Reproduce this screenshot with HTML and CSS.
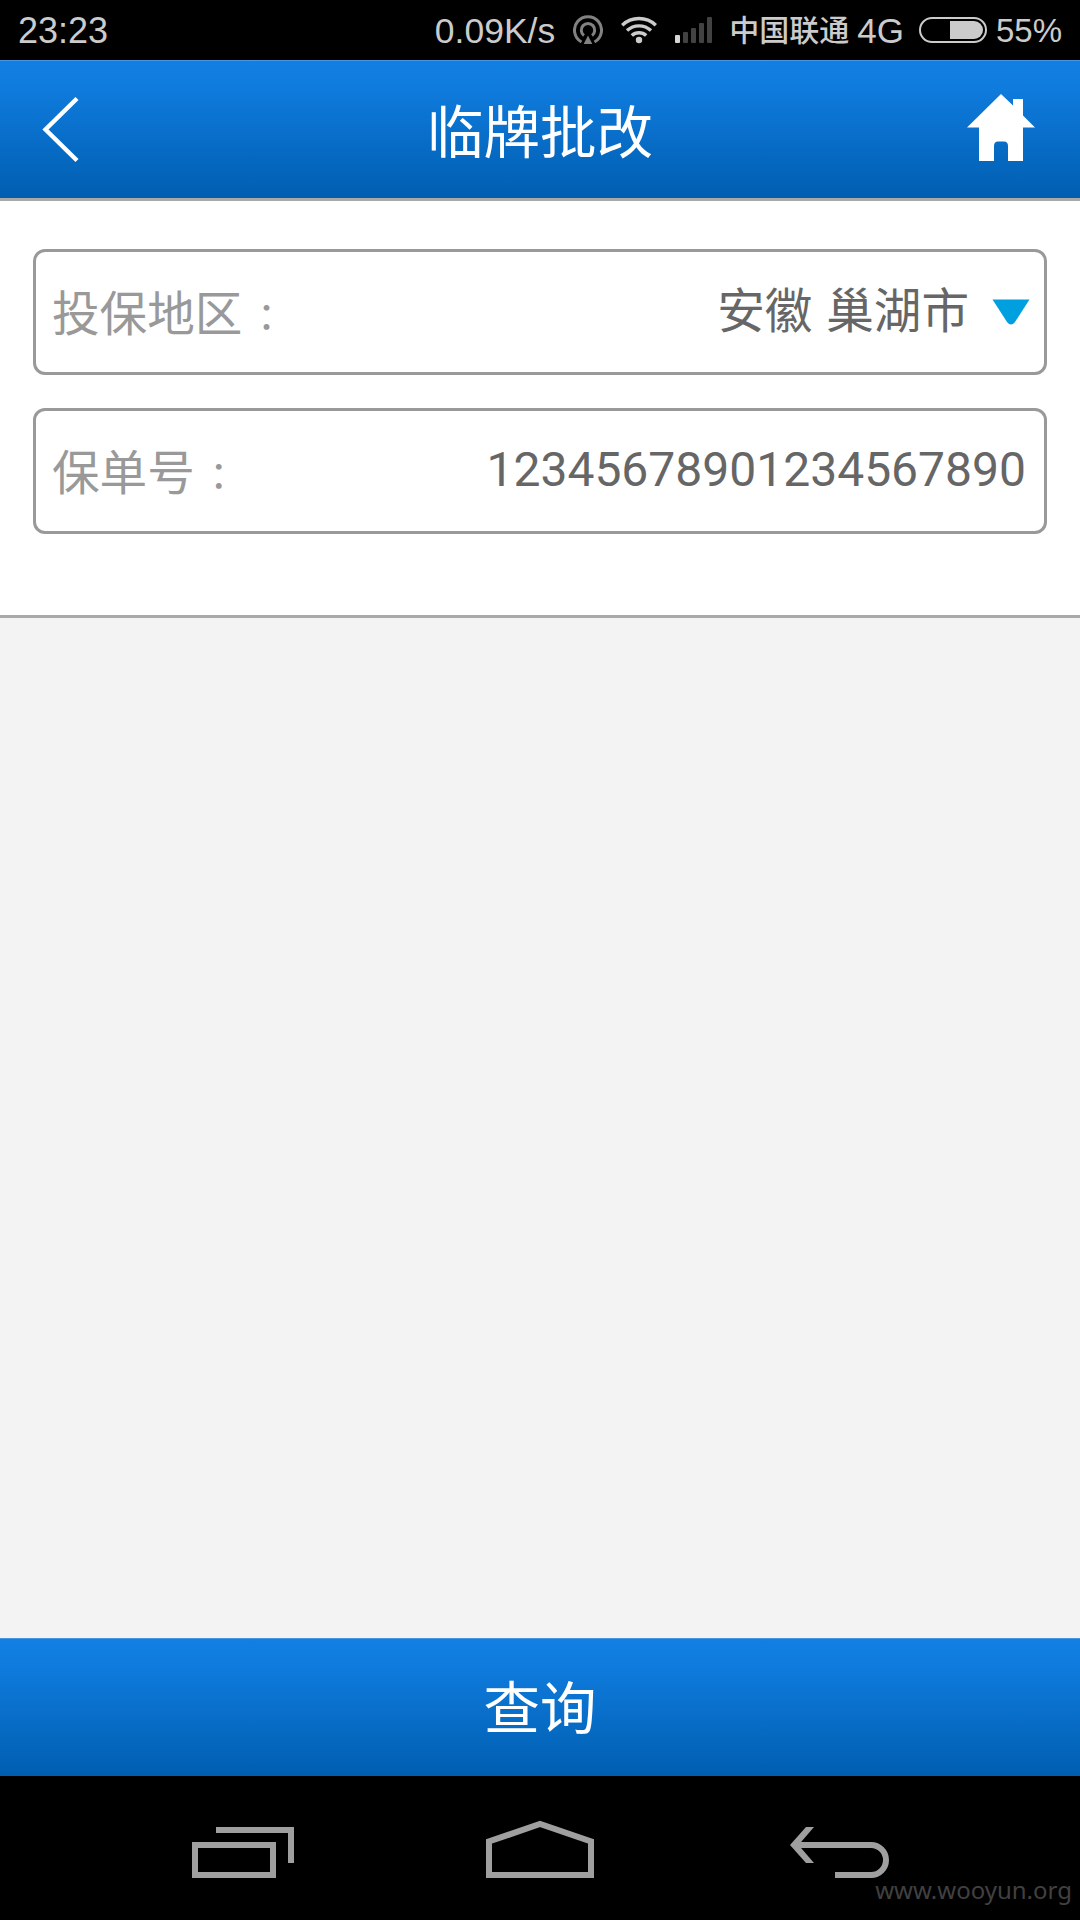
FILE: index.html
```html
<!DOCTYPE html>
<html lang="zh-CN">
  <head>
    <meta charset="UTF-8" />
    <meta name="viewport" content="width=device-width, initial-scale=1.0" />
    <title>临牌批改</title>
    <link rel="stylesheet" href="styles.css">
  </head>
  <body>
    <div class="status-bar">
      <span class="time">23:23</span>
      <span class="speed">0.09K/s</span>
      <svg class="hotspot" width="30" height="30" viewBox="0 0 30 30" fill="none" stroke="#828282" stroke-width="3">
        <path d="M8.5 27A13.5 13.5 0 1 1 21.5 27" />
        <path d="M11 20.5A6.7 6.7 0 1 1 19 20.5" />
        <path d="M15 20.5L19.3 29H10.7Z" fill="#828282" stroke="none" />
      </svg>
      <svg class="wifi" width="36" height="28" viewBox="0 0 36 28" fill="none" stroke="#cbcbcb" stroke-width="3.4">
        <path d="M1.2 9.2A24.5 24.5 0 0 1 34.8 9.2" />
        <path d="M6 14.6A17.5 17.5 0 0 1 30 14.6" />
        <path d="M10.8 19.6A10.5 10.5 0 0 1 25.2 19.6" />
        <circle cx="18" cy="24" r="3.2" fill="#cbcbcb" stroke="none" />
      </svg>
      <svg class="signal" width="37" height="26" viewBox="0 0 37 26" fill="#424242">
        <rect x="0" y="18" width="5" height="8" rx="1" fill="#d6d6d6" />
        <rect x="8" y="15" width="5" height="11" rx="1" />
        <rect x="16" y="11" width="5" height="15" rx="1" />
        <rect x="24" y="6" width="5" height="20" rx="1" />
        <rect x="32" y="0" width="5" height="26" rx="1" />
      </svg>
      <span class="carrier">中国联通</span>
      <span class="network">4G</span>
      <svg class="battery" width="68" height="26" viewBox="0 0 68 26">
        <rect x="1" y="1" width="66" height="24" rx="12" fill="none" stroke="#cbcbcb" stroke-width="2" />
        <path d="M31 4H55A9 9 0 0 1 55 22H31Z" fill="#cbcbcb" />
      </svg>
      <span class="percent">55%</span>
    </div>

    <header class="header">
      <svg class="back" width="40" height="70" viewBox="0 0 40 70" fill="none" stroke="#fff" stroke-width="4.4">
        <path d="M37 4.5L5.5 35.5L37 66.5" />
      </svg>
      <h1 class="title">临牌批改</h1>
      <svg class="home" width="68" height="68" viewBox="0 0 68 68" fill="#fff">
        <path d="M34 0L46 11.5V5H56V21.5L68 33.5H56V67H41V52Q41 47.5 37 47.5H31Q27 47.5 27 52V67H12V33.5H0Z" />
      </svg>
    </header>

    <div class="form">
      <div class="field">
        <span class="label">投保地区<span class="colon" lang="zh-TW">：</span></span>
        <span class="value city">安徽 巢湖市</span>
        <svg class="arrow" width="38" height="27" viewBox="0 0 38 27" fill="#009fe0">
          <path d="M0.5 0.5H37.5L23 23Q19 28 15 23Z" />
        </svg>
      </div>
      <div class="field">
        <span class="label">保单号<span class="colon" lang="zh-TW">：</span></span>
        <span class="value number">12345678901234567890</span>
      </div>
    </div>

    <main class="content"></main>

    <button class="query-btn">查询</button>

    <nav class="nav-bar">
      <svg width="102" height="51" viewBox="0 0 102 51" fill="none" stroke="#9f9f9f" stroke-width="6">
        <path d="M3 18H81V48H3Z" />
        <path d="M24 3H99V36" />
      </svg>
      <svg class="nav-home" width="108" height="58" viewBox="0 0 108 58" fill="none" stroke="#9f9f9f" stroke-width="6">
        <path d="M3 55V21.5L54 4L105 21.5V55Z" />
      </svg>
      <svg class="nav-back" width="99" height="51" viewBox="0 0 99 51" fill="none" stroke="#9f9f9f" stroke-width="6">
        <path d="M6 18H81A15 15 0 0 1 81 48H45" />
        <path d="M0 18L16 0H24L8.5 18L24 36H16Z" fill="#9f9f9f" stroke="none" />
      </svg>
      <span class="site">www.wooyun.org</span>
    </nav>
  </body>
</html>
```
FILE: styles.css
```css
* {
  margin: 0;
  padding: 0;
  box-sizing: border-box;
}

body {
  font-family: Roboto, 'Noto Sans CJK SC', sans-serif;
  background-color: #f3f3f3;
  height: 1920px;
  display: flex;
  flex-direction: column;
}

svg {
  display: block;
  flex-shrink: 0;
}

.status-bar {
  height: 60px;
  padding: 0 18px;
  background-color: #000;
  color: #cbcbcb;
  font-family: 'Liberation Sans', 'Noto Sans CJK SC', sans-serif;
  font-size: 36px;
  line-height: 58px;
  display: flex;
  align-items: center;
  white-space: nowrap;
}

.time,
.speed,
.carrier,
.network,
.percent {
  padding-top: 2px;
}

.speed {
  margin-left: auto;
  font-size: 35.5px;
}

.hotspot {
  margin-left: 18px;
}

.wifi {
  margin-left: 18px;
}

.signal {
  margin-left: 18px;
}

.carrier {
  margin-left: 17px;
  font-size: 30px;
  font-weight: 500;
}

.network {
  margin-left: 8px;
  font-size: 35px;
}

.battery {
  margin-left: 15px;
}

.percent {
  margin-left: 9px;
  font-size: 33px;
}

.header {
  height: 141px;
  padding: 0 40px 2px;
  border-top: 1px solid #4796e3;
  border-bottom: 3px solid #a9a9a9;
  background: linear-gradient(#127fe3, #0f7bdd 20%, #005eb0);
  display: grid;
  grid-template-columns: 1fr auto 1fr;
  align-items: center;
}

.title {
  padding-top: 10px;
  color: #fff;
  font-size: 56.5px;
  font-weight: 400;
  line-height: 80px;
}

.home {
  justify-self: end;
  margin: 0 5px 2px 0;
}

.form {
  height: 417px;
  padding: 48px 33px 0;
  background-color: #fff;
  border-bottom: 3px solid #a9a9a9;
}

.field {
  height: 126px;
  margin-bottom: 33px;
  padding: 0 18px 0 16px;
  border: 3px solid #999;
  border-radius: 12px;
  display: flex;
  align-items: center;
  font-size: 47.6px;
  line-height: 72px;
}

.label {
  padding-top: 6px;
  color: #999;
}

.colon {
  padding-left: 5px;
  font-family: 'Noto Sans CJK TC', sans-serif;
  font-size: 38px;
  line-height: 1;
}

.value {
  margin-left: auto;
  padding-bottom: 1px;
  color: #666;
}

.city {
  word-spacing: 2px;
}

.number {
  padding-bottom: 3px;
  font-size: 48px;
}

.arrow {
  margin-left: 23px;
  margin-right: -4px;
}

.content {
  flex: 1;
}

.query-btn {
  height: 138px;
  padding-bottom: 8px;
  border: none;
  border-top: 1px solid #4796e3;
  background: linear-gradient(#127fe3, #0f7bdd 20%, #005eb0);
  color: #fff;
  font-family: inherit;
  font-size: 56.5px;
}

.nav-bar {
  position: relative;
  height: 144px;
  padding: 0 191px 42px 192px;
  background-color: #000;
  display: flex;
  align-items: flex-end;
}

.nav-home {
  margin-left: 192px;
}

.nav-back {
  margin-left: auto;
}

.site {
  position: absolute;
  right: 8px;
  bottom: 13px;
  color: #404040;
  font-family: 'Noto Sans', sans-serif;
  font-size: 24px;
  line-height: 34px;
}
```
